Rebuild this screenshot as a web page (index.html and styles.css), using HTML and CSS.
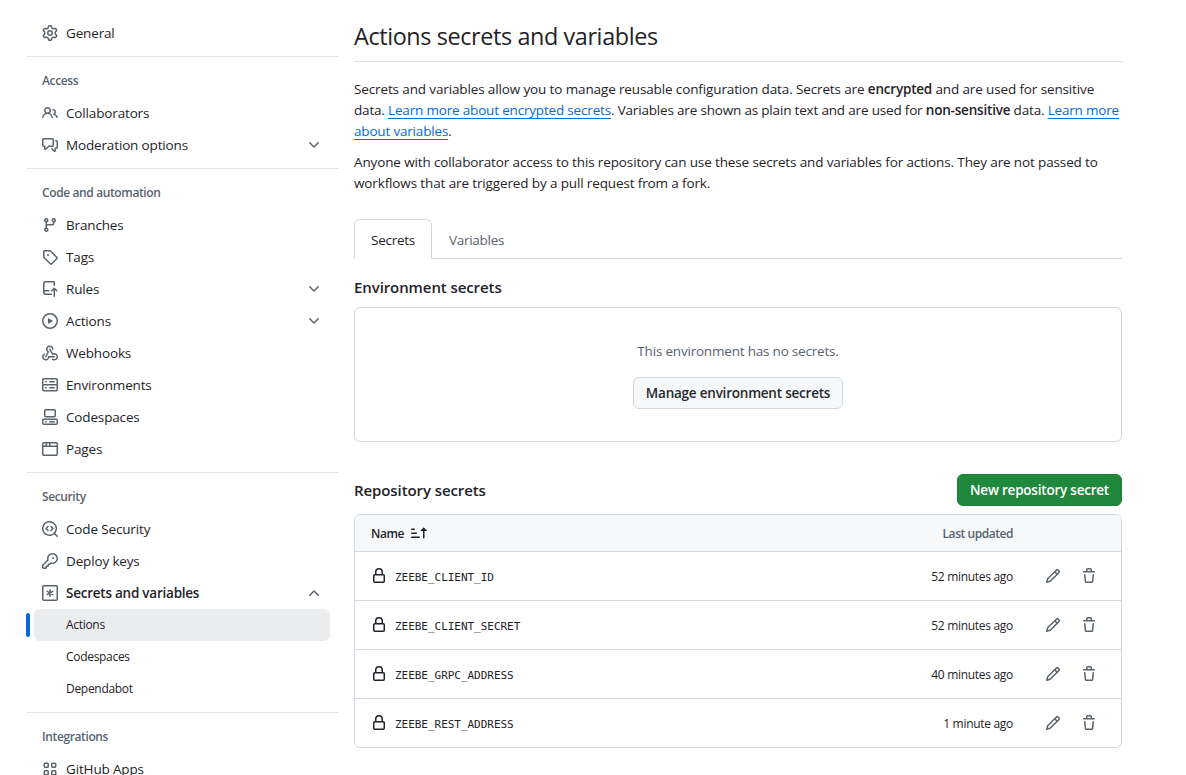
FILE: index.html
```html
<!DOCTYPE html>
<html lang="en">
<head>
<meta charset="utf-8">
<title>Actions secrets and variables</title>
<link rel="stylesheet" href="styles.css">
</head>
<body>
<svg class="sprite" width="0" height="0" aria-hidden="true">
  <symbol id="gear" viewBox="0 0 16 16"><path d="M8 0a8.2 8.2 0 0 1 .701.031C9.444.095 9.99.645 10.16 1.29l.288 1.107c.018.066.079.158.212.224.231.114.454.243.668.386.123.082.233.09.299.071l1.103-.303c.644-.176 1.392.021 1.82.63.27.385.506.792.704 1.218.315.675.111 1.422-.364 1.891l-.814.806c-.049.048-.098.147-.088.294.016.257.016.515 0 .772-.01.147.038.246.088.294l.814.806c.475.469.679 1.216.364 1.891a7.977 7.977 0 0 1-.704 1.217c-.428.61-1.176.807-1.82.63l-1.102-.302c-.067-.019-.177-.011-.3.071a5.909 5.909 0 0 1-.668.386c-.133.066-.194.158-.211.224l-.29 1.106c-.168.646-.715 1.196-1.458 1.26a8.006 8.006 0 0 1-1.402 0c-.743-.064-1.289-.614-1.458-1.26l-.289-1.106c-.018-.066-.079-.158-.212-.224a5.738 5.738 0 0 1-.668-.386c-.123-.082-.233-.09-.299-.071l-1.103.303c-.644.176-1.392-.021-1.82-.63a8.12 8.12 0 0 1-.704-1.218c-.315-.675-.111-1.422.363-1.891l.815-.806c.05-.048.098-.147.088-.294a6.214 6.214 0 0 1 0-.772c.01-.147-.038-.246-.088-.294l-.815-.806C.635 6.045.431 5.298.746 4.623a7.92 7.92 0 0 1 .704-1.217c.428-.61 1.176-.807 1.82-.63l1.102.302c.067.019.177.011.3-.071.214-.143.437-.272.668-.386.133-.066.194-.158.211-.224l.29-1.106C6.009.645 6.556.095 7.299.03 7.53.01 7.764 0 8 0Zm-.571 1.525c-.036.003-.108.036-.137.146l-.289 1.105c-.147.561-.549.967-.998 1.189-.173.086-.34.183-.5.29-.417.278-.97.423-1.529.27l-1.103-.303c-.109-.03-.175.016-.195.045-.22.312-.412.644-.573.99-.014.031-.021.11.059.19l.815.806c.411.406.562.957.53 1.456a4.709 4.709 0 0 0 0 .582c.032.499-.119 1.05-.53 1.456l-.815.806c-.081.08-.073.159-.059.19.162.346.353.677.573.989.02.03.085.076.195.046l1.102-.303c.56-.153 1.113-.008 1.53.27.161.107.328.204.501.29.447.222.85.629.997 1.189l.289 1.105c.029.109.101.143.137.146a6.6 6.6 0 0 0 1.142 0c.036-.003.108-.036.137-.146l.289-1.105c.147-.561.549-.967.998-1.189.173-.086.34-.183.5-.29.417-.278.97-.423 1.529-.27l1.103.303c.109.029.175-.016.195-.045.22-.313.411-.644.573-.99.014-.031.021-.11-.059-.19l-.815-.806c-.411-.406-.562-.957-.53-1.456a4.709 4.709 0 0 0 0-.582c-.032-.499.119-1.05.53-1.456l.815-.806c.081-.08.073-.159.059-.19a6.464 6.464 0 0 0-.573-.989c-.02-.03-.085-.076-.195-.046l-1.102.303c-.56.153-1.113.008-1.53-.27a4.44 4.44 0 0 0-.501-.29c-.447-.222-.85-.629-.997-1.189l-.289-1.105c-.029-.11-.101-.143-.137-.146a6.6 6.6 0 0 0-1.142 0ZM11 8a3 3 0 1 1-6 0 3 3 0 0 1 6 0ZM9.5 8a1.5 1.5 0 1 0-3.001.001A1.5 1.5 0 0 0 9.5 8Z"/></symbol>
  <symbol id="people" viewBox="0 0 16 16"><path d="M2 5.5a3.5 3.5 0 1 1 5.898 2.549 5.508 5.508 0 0 1 3.034 4.084.75.75 0 1 1-1.482.235 4 4 0 0 0-7.9 0 .75.75 0 0 1-1.482-.236A5.507 5.507 0 0 1 3.102 8.05 3.493 3.493 0 0 1 2 5.5ZM11 4a3.001 3.001 0 0 1 2.22 5.018 5.01 5.01 0 0 1 2.56 3.012.749.749 0 0 1-.885.954.752.752 0 0 1-.549-.514 3.507 3.507 0 0 0-2.522-2.372.75.75 0 0 1-.574-.73v-.352a.75.75 0 0 1 .416-.672A1.5 1.5 0 0 0 11 5.5.75.75 0 0 1 11 4Zm-5.5-.5a2 2 0 1 0-.001 3.999A2 2 0 0 0 5.5 3.5Z"/></symbol>
  <symbol id="discussion" viewBox="0 0 16 16"><path d="M1.75 1h8.5c.966 0 1.75.784 1.75 1.75v5.5A1.75 1.75 0 0 1 10.25 10H7.061l-2.574 2.573A1.458 1.458 0 0 1 2 11.543V10h-.25A1.75 1.75 0 0 1 0 8.25v-5.5C0 1.784.784 1 1.75 1ZM1.5 2.75v5.5c0 .138.112.25.25.25h1a.75.75 0 0 1 .75.75v2.19l2.72-2.72a.749.749 0 0 1 .53-.22h3.5a.25.25 0 0 0 .25-.25v-5.5a.25.25 0 0 0-.25-.25h-8.5a.25.25 0 0 0-.25.25Zm13 2a.25.25 0 0 0-.25-.25h-.5a.75.75 0 0 1 0-1.5h.5c.966 0 1.75.784 1.75 1.75v5.5A1.75 1.75 0 0 1 14.25 12H14v1.543a1.458 1.458 0 0 1-2.487 1.03L9.22 12.28a.749.749 0 0 1 .326-1.275.749.749 0 0 1 .734.215l2.22 2.22v-2.19a.75.75 0 0 1 .75-.75h1a.25.25 0 0 0 .25-.25Z"/></symbol>
  <symbol id="chevron" viewBox="0 0 16 16"><path d="M12.78 5.22a.749.749 0 0 1 0 1.06l-4.25 4.25a.749.749 0 0 1-1.06 0L3.22 6.28a.749.749 0 1 1 1.06-1.06L8 8.939l3.72-3.719a.749.749 0 0 1 1.06 0Z"/></symbol>
  <symbol id="branch" viewBox="0 0 16 16"><path d="M9.5 3.25a2.25 2.25 0 1 1 3 2.122V6A2.5 2.5 0 0 1 10 8.5H6a1 1 0 0 0-1 1v1.128a2.251 2.251 0 1 1-1.5 0V5.372a2.25 2.25 0 1 1 1.5 0v1.836A2.493 2.493 0 0 1 6 7h4a1 1 0 0 0 1-1v-.628A2.25 2.25 0 0 1 9.5 3.25Zm-6 0a.75.75 0 1 0 1.5 0 .75.75 0 0 0-1.5 0Zm8.25-.75a.75.75 0 1 0 0 1.5.75.75 0 0 0 0-1.5ZM4.25 12a.75.75 0 1 0 0 1.5.75.75 0 0 0 0-1.5Z"/></symbol>
  <symbol id="tag" viewBox="0 0 16 16"><path d="M1 7.775V2.75C1 1.784 1.784 1 2.75 1h5.025c.464 0 .91.184 1.238.513l6.25 6.25a1.75 1.75 0 0 1 0 2.474l-5.026 5.026a1.75 1.75 0 0 1-2.474 0l-6.25-6.25A1.752 1.752 0 0 1 1 7.775Zm1.5 0c0 .066.026.13.073.177l6.25 6.25a.25.25 0 0 0 .354 0l5.025-5.025a.25.25 0 0 0 0-.354l-6.25-6.25a.25.25 0 0 0-.177-.073H2.75a.25.25 0 0 0-.25.25ZM6 5a1 1 0 1 1 0 2 1 1 0 0 1 0-2Z"/></symbol>
  <symbol id="push" viewBox="0 0 16 16"><path d="M1 2.5A2.5 2.5 0 0 1 3.5 0h8.75a.75.75 0 0 1 .75.75v3.5a.75.75 0 0 1-1.5 0V1.5h-8a1 1 0 0 0-1 1v6.708A2.493 2.493 0 0 1 3.5 9h3.25a.75.75 0 0 1 0 1.5H3.5a1 1 0 0 0 0 2h5.75a.75.75 0 0 1 0 1.5H3.5A2.5 2.5 0 0 1 1 11.5Zm13.23 7.79h-.001l-1.224-1.224v6.184a.75.75 0 0 1-1.5 0V9.066L10.28 10.29a.75.75 0 0 1-1.06-1.061l2.505-2.504a.75.75 0 0 1 1.06 0L15.29 9.23a.751.751 0 0 1-.018 1.042.751.751 0 0 1-1.042.018Z"/></symbol>
  <symbol id="play" viewBox="0 0 16 16"><path d="M8 0a8 8 0 1 1 0 16A8 8 0 0 1 8 0ZM1.5 8a6.5 6.5 0 1 0 13 0 6.5 6.5 0 0 0-13 0Zm4.879-2.773 4.264 2.559a.25.25 0 0 1 0 .428l-4.264 2.559A.25.25 0 0 1 6 10.559V5.442a.25.25 0 0 1 .379-.215Z"/></symbol>
  <symbol id="webhook" viewBox="0 0 16 16"><path d="M5.5 4.25a2.25 2.25 0 0 1 4.5 0 .75.75 0 0 0 1.5 0 3.75 3.75 0 1 0-6.14 2.889l-2.272 4.258a.75.75 0 0 0 1.324.706L7 7.25a.75.75 0 0 0-.309-1.015A2.25 2.25 0 0 1 5.5 4.25Z"/><path d="M7.364 3.607a.75.75 0 0 1 1.03.257l2.608 4.349a3.75 3.75 0 1 1-.628 6.785.75.75 0 0 1 .752-1.299 2.25 2.25 0 1 0-.033-3.88.75.75 0 0 1-1.03-.256L7.107 4.636a.75.75 0 0 1 .257-1.03Z"/><path d="M2.9 8.776A.75.75 0 0 1 2.625 9.8 2.25 2.25 0 1 0 6 11.75a.75.75 0 0 1 .75-.751h5.5a.75.75 0 0 1 0 1.5H7.425a3.751 3.751 0 1 1-5.55-3.998.75.75 0 0 1 1.024.274Z"/></symbol>
  <symbol id="server" viewBox="0 0 16 16"><path d="M1.75 1h12.5c.966 0 1.75.784 1.75 1.75v4c0 .372-.116.717-.314 1 .198.283.314.628.314 1v4a1.75 1.75 0 0 1-1.75 1.75H1.75A1.75 1.75 0 0 1 0 12.75v-4c0-.358.109-.707.314-1a1.739 1.739 0 0 1-.314-1v-4C0 1.784.784 1 1.75 1ZM1.5 2.75v4c0 .138.112.25.25.25h12.5a.25.25 0 0 0 .25-.25v-4a.25.25 0 0 0-.25-.25H1.75a.25.25 0 0 0-.25.25Zm.25 5.75a.25.25 0 0 0-.25.25v4c0 .138.112.25.25.25h12.5a.25.25 0 0 0 .25-.25v-4a.25.25 0 0 0-.25-.25ZM7 4.75A.75.75 0 0 1 7.75 4h4.5a.75.75 0 0 1 0 1.5h-4.5A.75.75 0 0 1 7 4.75ZM7.75 10h4.5a.75.75 0 0 1 0 1.5h-4.5a.75.75 0 0 1 0-1.5ZM3 4.75A.75.75 0 0 1 3.75 4h.5a.75.75 0 0 1 0 1.5h-.5A.75.75 0 0 1 3 4.75ZM3.75 10h.5a.75.75 0 0 1 0 1.5h-.5a.75.75 0 0 1 0-1.5Z"/></symbol>
  <symbol id="codespaces" viewBox="0 0 16 16"><path d="M0 11.25c0-.966.784-1.75 1.75-1.75h12.5c.966 0 1.75.784 1.75 1.75v3A1.75 1.75 0 0 1 14.25 16H1.75A1.75 1.75 0 0 1 0 14.25Zm2-9.5C2 .784 2.784 0 3.75 0h8.5C13.216 0 14 .784 14 1.75v5a1.75 1.75 0 0 1-1.75 1.75h-8.5A1.75 1.75 0 0 1 2 6.75Zm1.75-.25a.25.25 0 0 0-.25.25v5c0 .138.112.25.25.25h8.5a.25.25 0 0 0 .25-.25v-5a.25.25 0 0 0-.25-.25Zm-2 9.5a.25.25 0 0 0-.25.25v3c0 .138.112.25.25.25h12.5a.25.25 0 0 0 .25-.25v-3a.25.25 0 0 0-.25-.25Z"/><path d="M7 12.75a.75.75 0 0 1 .75-.75h4.5a.75.75 0 0 1 0 1.5h-4.5a.75.75 0 0 1-.75-.75Zm-4 0a.75.75 0 0 1 .75-.75h.5a.75.75 0 0 1 0 1.5h-.5a.75.75 0 0 1-.75-.75Z"/></symbol>
  <symbol id="browser" viewBox="0 0 16 16"><path d="M0 2.75C0 1.784.784 1 1.75 1h12.5c.966 0 1.75.784 1.75 1.75v10.5A1.75 1.75 0 0 1 14.25 15H1.75A1.75 1.75 0 0 1 0 13.25ZM14.5 6h-13v7.25c0 .138.112.25.25.25h12.5a.25.25 0 0 0 .25-.25Zm-6-3.5v2h6V2.75a.25.25 0 0 0-.25-.25ZM5 2.5v2h2v-2Zm-3.25 0a.25.25 0 0 0-.25.25V4.5h2v-2Z"/></symbol>
  <symbol id="codescan" viewBox="0 0 16 16"><path d="M8.47 4.97a.75.75 0 0 0 0 1.06L9.94 7.5 8.47 8.97a.75.75 0 1 0 1.06 1.06l2-2a.75.75 0 0 0 0-1.06l-2-2a.75.75 0 0 0-1.06 0ZM6.53 6.03a.75.75 0 0 0-1.06-1.06l-2 2a.75.75 0 0 0 0 1.06l2 2a.75.75 0 1 0 1.06-1.06L5.06 7.5l1.47-1.47Z"/><path d="M12.246 13.307a7.501 7.501 0 1 1 1.06-1.06l2.474 2.473a.749.749 0 1 1-1.06 1.06l-2.474-2.473ZM1.5 7.5a6.002 6.002 0 0 0 3.608 5.504 6.002 6.002 0 0 0 6.486-1.117.748.748 0 0 1 .292-.293A6 6 0 1 0 1.5 7.5Z"/></symbol>
  <symbol id="key" viewBox="0 0 16 16"><path d="M10.5 0a5.499 5.499 0 1 1-1.288 10.848l-.932.932a.749.749 0 0 1-.53.22H7v.75a.749.749 0 0 1-.22.53l-.5.5a.749.749 0 0 1-.53.22H5v.75a.749.749 0 0 1-.22.53l-.5.5a.749.749 0 0 1-.53.22h-2A1.75 1.75 0 0 1 0 14.25v-2c0-.199.079-.389.22-.53l4.932-4.932A5.5 5.5 0 0 1 10.5 0Zm-4 5.5c-.001.431.069.86.205 1.269a.75.75 0 0 1-.181.768L1.5 12.56v1.69c0 .138.112.25.25.25h1.69l.06-.06v-1.19a.75.75 0 0 1 .75-.75h1.19l.06-.06v-1.19a.75.75 0 0 1 .75-.75h1.19l1.023-1.025a.75.75 0 0 1 .768-.18A4 4 0 1 0 6.5 5.5ZM11 6a1 1 0 1 1 0-2 1 1 0 0 1 0 2Z"/></symbol>
  <symbol id="asterisk" viewBox="0 0 16 16"><rect x=".75" y=".75" width="14.5" height="14.5" rx="1" fill="none" stroke="currentColor" stroke-width="1.5"/><path d="M8 4.75v6.5M5.2 6.4l5.6 3.2M10.8 6.4 5.2 9.6" fill="none" stroke="currentColor" stroke-width="1.5" stroke-linecap="round"/></symbol>
  <symbol id="apps" viewBox="0 0 16 16"><g fill="none" stroke="currentColor" stroke-width="1.5"><rect x="2.25" y="2.25" width="4" height="4" rx=".9"/><rect x="9.75" y="2.25" width="4" height="4" rx=".9"/><rect x="2.25" y="9.75" width="4" height="4" rx=".9"/><rect x="9.75" y="9.75" width="4" height="4" rx=".9"/></g></symbol>
  <symbol id="sort" viewBox="0 0 16 16"><path d="m12.927 2.573 3 3A.25.25 0 0 1 15.75 6H13.5v6.75a.75.75 0 0 1-1.5 0V6H9.75a.25.25 0 0 1-.177-.427l3-3a.25.25 0 0 1 .354 0ZM0 12.25a.75.75 0 0 1 .75-.75h7.5a.75.75 0 0 1 0 1.5H.75a.75.75 0 0 1-.75-.75Zm0-4a.75.75 0 0 1 .75-.75h4.5a.75.75 0 0 1 0 1.5H.75A.75.75 0 0 1 0 8.25Zm0-4a.75.75 0 0 1 .75-.75h2.5a.75.75 0 0 1 0 1.5H.75A.75.75 0 0 1 0 4.25Z"/></symbol>
  <symbol id="lock" viewBox="0 0 16 16"><path d="M4 4a4 4 0 0 1 8 0v2h.25c.966 0 1.75.784 1.75 1.75v5.5A1.75 1.75 0 0 1 12.25 15h-8.5A1.75 1.75 0 0 1 2 13.25v-5.5C2 6.784 2.784 6 3.75 6H4Zm8.25 3.5h-8.5a.25.25 0 0 0-.25.25v5.5c0 .138.112.25.25.25h8.5a.25.25 0 0 0 .25-.25v-5.5a.25.25 0 0 0-.25-.25ZM10.5 6V4a2.5 2.5 0 1 0-5 0v2Z"/></symbol>
  <symbol id="pencil" viewBox="0 0 16 16"><path d="M11.013 1.427a1.75 1.75 0 0 1 2.474 0l1.086 1.086a1.75 1.75 0 0 1 0 2.474l-8.61 8.61c-.21.21-.47.364-.756.445l-3.251.93a.75.75 0 0 1-.927-.928l.929-3.25c.081-.286.235-.547.445-.758l8.61-8.61Zm.176 4.823L9.75 4.81l-6.286 6.287a.253.253 0 0 0-.064.108l-.558 1.953 1.953-.558a.253.253 0 0 0 .108-.064Zm1.238-3.763a.25.25 0 0 0-.354 0L10.811 3.75l1.439 1.44 1.263-1.263a.25.25 0 0 0 0-.354Z"/></symbol>
  <symbol id="trash" viewBox="0 0 16 16"><path d="M11 1.75V3h2.25a.75.75 0 0 1 0 1.5H2.75a.75.75 0 0 1 0-1.5H5V1.75C5 .784 5.784 0 6.75 0h2.5C10.216 0 11 .784 11 1.75ZM4.496 6.675l.66 6.6a.25.25 0 0 0 .249.225h5.19a.25.25 0 0 0 .249-.225l.66-6.6a.75.75 0 0 1 1.492.149l-.66 6.6A1.748 1.748 0 0 1 10.595 15h-5.19a1.75 1.75 0 0 1-1.741-1.575l-.66-6.6a.75.75 0 1 1 1.492-.15ZM6.5 1.75V3h3V1.75a.25.25 0 0 0-.25-.25h-2.5a.25.25 0 0 0-.25.25Z"/></symbol>
</svg>
<div class="layout">
  <nav class="sidebar">
    <section class="group">
      <a class="item"><svg class="icon"><use href="#gear"/></svg><span class="label">General</span></a>
    </section>
    <section class="group">
      <h3 class="group-title">Access</h3>
      <a class="item"><svg class="icon"><use href="#people"/></svg><span class="label">Collaborators</span></a>
      <a class="item"><svg class="icon"><use href="#discussion"/></svg><span class="label">Moderation options</span><svg class="icon"><use href="#chevron"/></svg></a>
    </section>
    <section class="group">
      <h3 class="group-title">Code and automation</h3>
      <a class="item"><svg class="icon"><use href="#branch"/></svg><span class="label">Branches</span></a>
      <a class="item"><svg class="icon"><use href="#tag"/></svg><span class="label">Tags</span></a>
      <a class="item"><svg class="icon"><use href="#push"/></svg><span class="label">Rules</span><svg class="icon"><use href="#chevron"/></svg></a>
      <a class="item"><svg class="icon"><use href="#play"/></svg><span class="label">Actions</span><svg class="icon"><use href="#chevron"/></svg></a>
      <a class="item"><svg class="icon"><use href="#webhook"/></svg><span class="label">Webhooks</span></a>
      <a class="item"><svg class="icon"><use href="#server"/></svg><span class="label">Environments</span></a>
      <a class="item"><svg class="icon"><use href="#codespaces"/></svg><span class="label">Codespaces</span></a>
      <a class="item"><svg class="icon"><use href="#browser"/></svg><span class="label">Pages</span></a>
    </section>
    <section class="group">
      <h3 class="group-title">Security</h3>
      <a class="item"><svg class="icon"><use href="#codescan"/></svg><span class="label">Code Security</span></a>
      <a class="item"><svg class="icon"><use href="#key"/></svg><span class="label">Deploy keys</span></a>
      <a class="item item-open"><svg class="icon"><use href="#asterisk"/></svg><span class="label">Secrets and variables</span><svg class="icon icon-up"><use href="#chevron"/></svg></a>
      <a class="subitem subitem-current">Actions</a>
      <a class="subitem">Codespaces</a>
      <a class="subitem">Dependabot</a>
    </section>
    <section class="group">
      <h3 class="group-title">Integrations</h3>
      <a class="item"><svg class="icon"><use href="#apps"/></svg><span class="label">GitHub Apps</span></a>
    </section>
  </nav>
  <main class="content">
    <h1 class="page-title">Actions secrets and variables</h1>
    <p class="intro">Secrets and variables allow you to manage reusable configuration data. Secrets are <b>encrypted</b> and are used for sensitive<br><span class="tight">data. <a class="link">Learn more about encrypted secrets</a>. Variables are shown as plain text and are used for <b>non-sensitive</b> data. <a class="link">Learn more<br>about variables</a>.</span></p>
    <p class="intro">Anyone with collaborator access to this repository can use these secrets and variables for actions. They are not passed to<br>workflows that are triggered by a pull request from a fork.</p>
    <div class="tabs"><a class="tab tab-current">Secrets</a><a class="tab">Variables</a></div>
    <h2 class="section-title">Environment secrets</h2>
    <div class="blank">
      <p class="blank-text">This environment has no secrets.</p>
      <a class="button">Manage environment secrets</a>
    </div>
    <div class="section-head">
      <h2 class="section-title">Repository secrets</h2>
      <a class="button button-primary">New repository secret</a>
    </div>
    <div class="table">
      <div class="row row-head"><span class="name">Name</span><svg class="icon sort"><use href="#sort"/></svg><span class="updated">Last updated</span></div>
      <div class="row"><svg class="icon lock"><use href="#lock"/></svg><code class="secret">ZEEBE_CLIENT_ID</code><span class="updated">52 minutes ago</span><svg class="icon"><use href="#pencil"/></svg><svg class="icon"><use href="#trash"/></svg></div>
      <div class="row"><svg class="icon lock"><use href="#lock"/></svg><code class="secret">ZEEBE_CLIENT_SECRET</code><span class="updated">52 minutes ago</span><svg class="icon"><use href="#pencil"/></svg><svg class="icon"><use href="#trash"/></svg></div>
      <div class="row"><svg class="icon lock"><use href="#lock"/></svg><code class="secret">ZEEBE_GRPC_ADDRESS</code><span class="updated">40 minutes ago</span><svg class="icon"><use href="#pencil"/></svg><svg class="icon"><use href="#trash"/></svg></div>
      <div class="row"><svg class="icon lock"><use href="#lock"/></svg><code class="secret">ZEEBE_REST_ADDRESS</code><span class="updated">1 minute ago</span><svg class="icon"><use href="#pencil"/></svg><svg class="icon"><use href="#trash"/></svg></div>
    </div>
  </main>
</div>
</body>
</html>
```
FILE: styles.css
```css
* { box-sizing: border-box; }
html { overflow: hidden; }
body {
  margin: 0;
  height: 775px;
  overflow: hidden;
  background: #fff;
  color: #1f2328;
  font: 13.5px/21px "Open Sans", "Noto Sans", sans-serif;
  letter-spacing: -0.15px;
}
h1, h2, h3, p { margin: 0; }
.sprite { display: block; }
.layout { display: flex; gap: 16px; padding: 9px 64px 0 26px; }
.sidebar { width: 312px; flex: none; }
.group { padding: 0 8px 7px; }
.group:first-child { padding-top: 8px; }
.group + .group { border-top: 1px solid #d1d9e0b3; padding-top: 8px; }
.group-title {
  padding: 7px 8px 7px;
  height: 32px;
  font-size: 12px;
  line-height: 18px;
  font-weight: 600;
  letter-spacing: -0.38px;
  color: #59636e;
}
.icon { width: 16px; height: 16px; flex: none; fill: currentColor; color: #59636e; display: block; }
.icon-up { transform: rotate(180deg); }
.item { display: flex; align-items: center; gap: 8px; height: 32px; padding: 0 8px; }
.label { flex: 1; white-space: nowrap; line-height: 20px; padding-bottom: 1px; }
.item-open { font-weight: 600; letter-spacing: -0.24px; }
.subitem {
  display: flex;
  align-items: center;
  position: relative;
  height: 32px;
  padding: 0 0 1px 32px;
  border-radius: 6px;
  font-size: 12px;
  line-height: 18px;
  letter-spacing: -0.3px;
}
.subitem-current { background: #ebecee; }
.subitem-current::before {
  content: "";
  position: absolute;
  left: -8px;
  top: 4px;
  width: 4px;
  height: 24px;
  border-radius: 6px;
  background: #0969da;
}
.content { width: 768px; padding-top: 9px; }
.page-title {
  height: 44px;
  margin-bottom: 17px;
  border-bottom: 1px solid #d1d9e0b3;
  font-size: 23.4px;
  line-height: 37px;
  font-weight: 400;
  letter-spacing: -0.39px;
}
.intro { margin-bottom: 10px; white-space: nowrap; letter-spacing: -0.13px; }
.intro b { font-weight: 600; letter-spacing: -0.2px; }
.tight { letter-spacing: -0.18px; }
.link {
  color: #0969da;
  text-decoration: underline;
  text-decoration-skip-ink: none;
  text-underline-offset: 3px;
}
.tabs { display: flex; height: 40px; margin: 25px 0 16px; border-bottom: 1px solid #d1d9e0; }
.tab { height: 40px; padding: 11px 17px; letter-spacing: -0.27px; color: #59636e; }
.tab-current {
  padding: 10px 16px;
  border: 1px solid #d1d9e0;
  border-bottom: 0;
  border-radius: 6px 6px 0 0;
  background: #fff;
  color: #1f2328;
}
.section-title { font-size: 15px; line-height: 24px; font-weight: 600; letter-spacing: -0.09px; }
.blank {
  display: flex;
  flex-direction: column;
  align-items: center;
  gap: 15px;
  height: 135px;
  margin: 8px 0 32px;
  padding-top: 33px;
  border: 1px solid #d1d9e0;
  border-radius: 6px;
}
.blank-text { color: #59636e; letter-spacing: -0.2px; }
.button {
  height: 32px;
  padding: 5px 12px;
  border: 1px solid #d1d9e0;
  border-radius: 6px;
  background: #f6f8fa;
  font-weight: 600;
  line-height: 20px;
  letter-spacing: -0.22px;
  color: #25292e;
  white-space: nowrap;
}
.button-primary { background: #1f883d; border-color: #1c7c38; color: #fff; }
.section-head { display: flex; justify-content: space-between; align-items: center; height: 32px; margin-bottom: 8px; }
.table { border: 1px solid #d1d9e0; border-radius: 6px; overflow: hidden; }
.row {
  display: flex;
  align-items: center;
  height: 49px;
  padding: 0 24px 0 16px;
  border-top: 1px solid #d1d9e0;
  font-size: 12px;
  letter-spacing: -0.3px;
  gap: 20px;
}
.row-head {
  height: 36px;
  padding-right: 108px;
  border-top: 0;
  background: #f6f8fa;
  font-weight: 600;
  letter-spacing: -0.45px;
  gap: 7px;
}
.sort { color: #1f2328; }
.lock { color: #1f2328; margin-right: -12px; }
.secret { padding-top: 3px; font: 11px/18px "DejaVu Sans Mono", monospace; letter-spacing: -0.03px; }
.updated { margin-left: auto; margin-right: 12px; }
.row-head .updated { margin-right: 0; color: #59636e; }
```
